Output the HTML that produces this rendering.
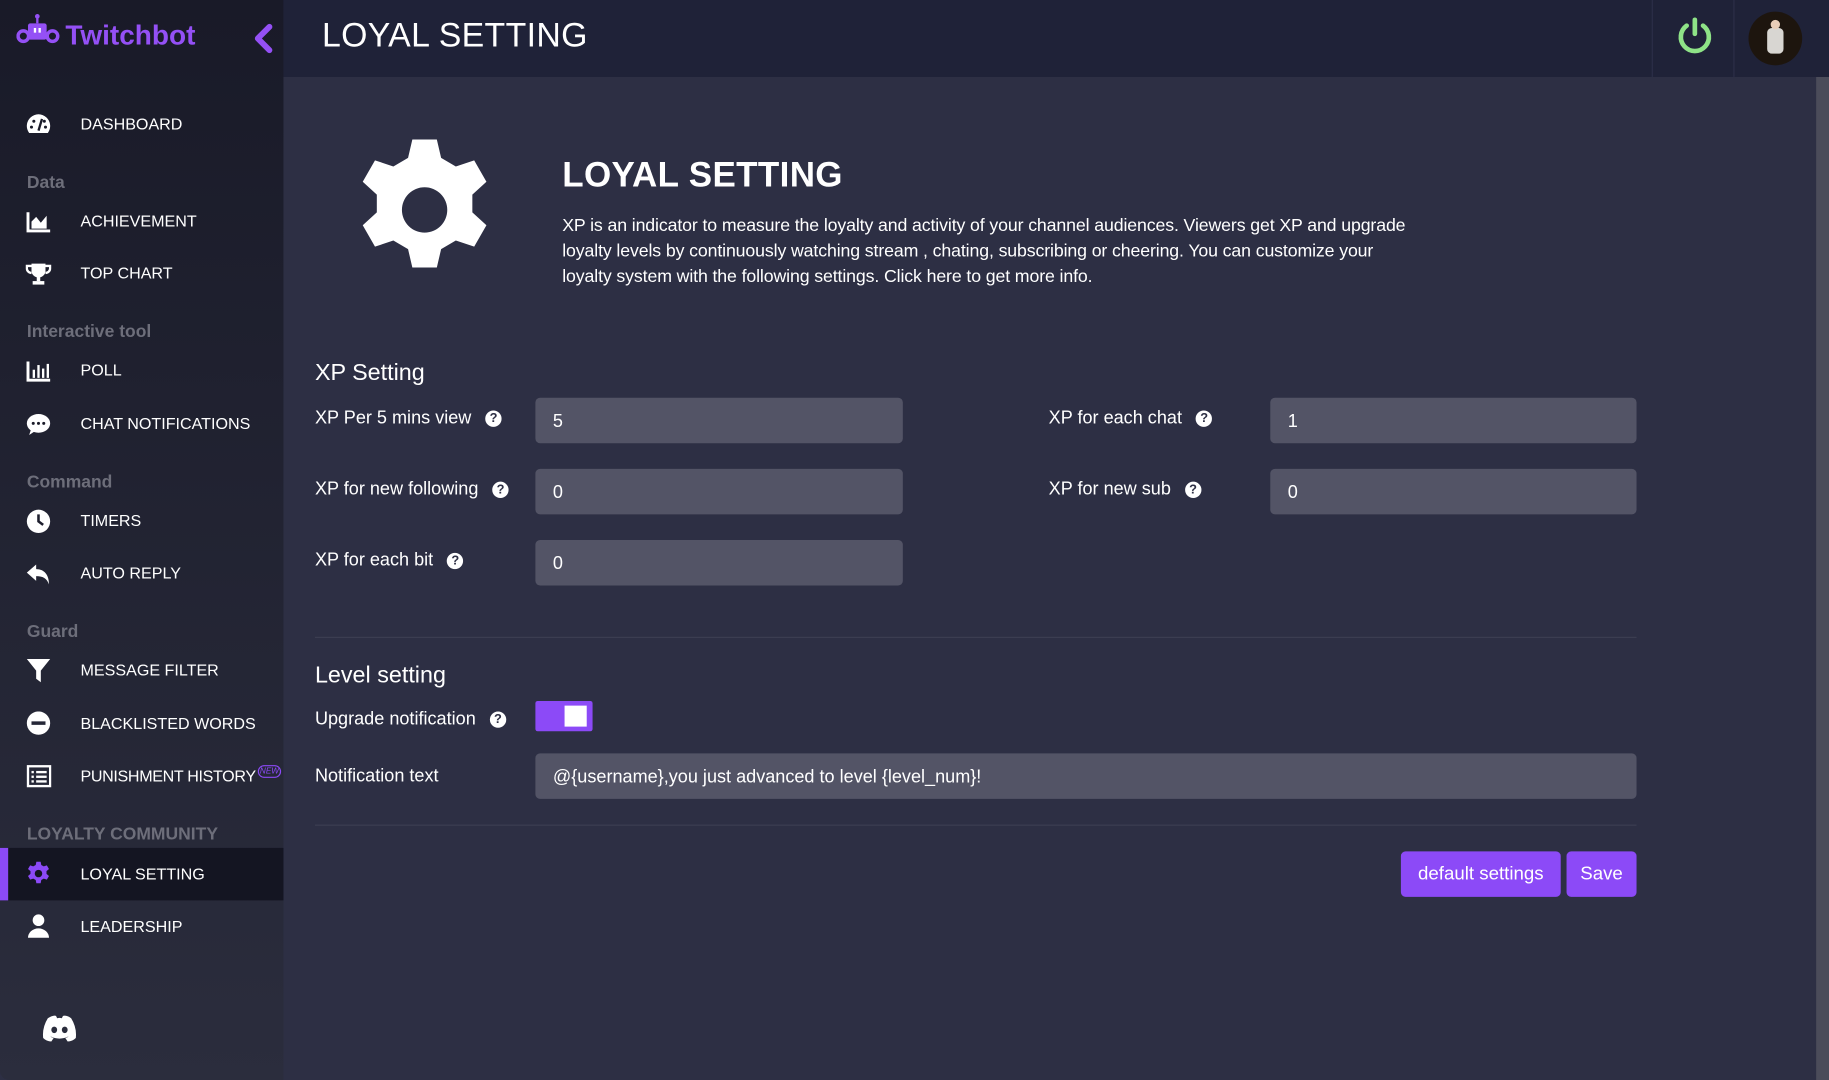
<!DOCTYPE html>
<html><head><meta charset="utf-8"><style>
*{box-sizing:border-box;margin:0;padding:0}
html,body{width:1829px;height:1080px;overflow:hidden;background:#2d2f44}
#w{position:absolute;left:0;top:0;width:1568px;height:926px;transform:scale(1.16645,1.16631);transform-origin:0 0;font-family:"Liberation Sans",sans-serif;color:#fff}
.a{position:absolute}
#side{left:0;top:0;width:243px;height:926px;background:linear-gradient(#191a28,#2b2d3d);border-bottom-left-radius:8px}
#hdr{left:243px;top:0;width:1325px;height:66px;background:#1f2238}
.it{position:absolute;left:69px;font-size:13.8px;line-height:16px}
.ic{position:absolute;left:22px;width:22px;height:22px}
.gr{position:absolute;left:23px;font-size:15px;font-weight:bold;color:#6d6e7a}
.lab{position:absolute;font-size:15.5px}
.inp{position:absolute;background:#535466;border-radius:4px;height:39px;font-size:15.5px;padding:12px 0 0 15px}
.q{display:inline-block;width:14px;height:14px;border-radius:50%;background:#fff;color:#2d2f44;font-size:11px;font-weight:bold;text-align:center;line-height:14px;vertical-align:1px;margin-left:12px}
.btn{position:absolute;background:#8c4af7;border-radius:4px;height:39px;font-size:16px;text-align:center;line-height:39px}
</style></head><body><div id="w">
<div class="a" id="side"></div>
<div class="a" id="hdr"></div>
<div class="a" style="left:1557px;top:66px;width:11px;height:860px;background:#4b4c5a"></div>
<div class="a" style="left:1416px;top:0;width:1px;height:66px;background:#2c2f48"></div>
<div class="a" style="left:1486px;top:0;width:1px;height:66px;background:#2c2f48"></div>
<svg class="a" style="left:14px;top:12px" width="40" height="30" viewBox="0 0 40 30"><rect x="10" y="8" width="16" height="14" rx="2" fill="#9450f5"/><rect x="17" y="2" width="2" height="6" fill="#9450f5"/><circle cx="18" cy="2" r="2" fill="#9450f5"/><rect x="15" y="12" width="2" height="4" fill="#fff"/><rect x="19" y="12" width="2" height="4" fill="#fff"/><circle cx="6" cy="19" r="4.5" fill="none" stroke="#9450f5" stroke-width="3"/><circle cx="31" cy="19" r="4.5" fill="none" stroke="#9450f5" stroke-width="3"/></svg>
<div class="a" style="left:56px;top:17px;font-size:24px;font-weight:bold;color:#9450f5">Twitchbot</div>
<svg class="a" style="left:216px;top:20px" width="20" height="26" viewBox="0 0 20 26"><path d="M15 3 L5 13 L15 23" stroke="#9450f5" stroke-width="5" fill="none" stroke-linecap="round" stroke-linejoin="round"/></svg>
<div class="a" style="left:276px;top:15px;font-size:29px;color:#fff;letter-spacing:0.3px">LOYAL SETTING</div>
<svg class="a" style="left:1436px;top:14px" width="34" height="34" viewBox="0 0 34 34"><path d="M10 8 A12 12 0 1 0 24 8" fill="none" stroke="#8ee387" stroke-width="4" stroke-linecap="round"/><line x1="17" y1="3" x2="17" y2="15" stroke="#8ee387" stroke-width="4" stroke-linecap="round"/></svg>
<div class="a" style="left:1499px;top:10px;width:46px;height:46px;border-radius:50%;background:#1d150e;overflow:hidden"><div class="a" style="left:16px;top:14px;width:14px;height:22px;background:#d8d6d2;border-radius:4px"></div><div class="a" style="left:19px;top:7px;width:8px;height:8px;border-radius:50%;background:#e8cdb8"></div></div>
<svg class="ic" style="top:96px" viewBox="0 0 22 22"><path d="M3 18 A10 10 0 1 1 19 18 Z" fill="#fff"/><circle cx="5" cy="13" r="1.3" fill="#191a28"/><circle cx="7" cy="8" r="1.3" fill="#191a28"/><circle cx="16" cy="8" r="1.3" fill="#191a28"/><circle cx="17" cy="13" r="1.3" fill="#191a28"/><path d="M11 16 L14 6" stroke="#191a28" stroke-width="2"/></svg>
<div class="it" style="top:99px">DASHBOARD</div>
<div class="gr" style="top:148px">Data</div>
<svg class="ic" style="top:179px" viewBox="0 0 22 22"><path d="M2 3 V19 H21" stroke="#fff" stroke-width="2.5" fill="none"/><path d="M5 17 L5 11 L9 7 L13 12 L18 6 L18 17 Z" fill="#fff"/></svg>
<div class="it" style="top:182px">ACHIEVEMENT</div>
<svg class="ic" style="top:224px" viewBox="0 0 22 22"><path d="M5 2 H17 V8 A6 6 0 0 1 5 8 Z" fill="#fff"/><path d="M5 4 H1 V6 A4 4 0 0 0 5 10 M17 4 H21 V6 A4 4 0 0 1 17 10" stroke="#fff" stroke-width="2" fill="none"/><rect x="9.5" y="13" width="3" height="4" fill="#fff"/><rect x="6" y="17" width="10" height="3" fill="#fff"/></svg>
<div class="it" style="top:227px">TOP CHART</div>
<div class="gr" style="top:276px">Interactive tool</div>
<svg class="ic" style="top:307px" viewBox="0 0 22 22"><path d="M2 3 V19 H21" stroke="#fff" stroke-width="2.5" fill="none"/><rect x="6" y="10" width="2" height="7" fill="#fff"/><rect x="10" y="6" width="2" height="11" fill="#fff"/><rect x="14" y="9" width="2" height="8" fill="#fff"/><rect x="18" y="5" width="2" height="12" fill="#fff"/></svg>
<div class="it" style="top:310px">POLL</div>
<svg class="ic" style="top:353px" viewBox="0 0 22 22"><ellipse cx="11" cy="10" rx="10" ry="8" fill="#fff"/><path d="M3 20 L5 14 L9 16 Z" fill="#fff"/><circle cx="6.5" cy="10" r="1.3" fill="#191a28"/><circle cx="11" cy="10" r="1.3" fill="#191a28"/><circle cx="15.5" cy="10" r="1.3" fill="#191a28"/></svg>
<div class="it" style="top:356px">CHAT NOTIFICATIONS</div>
<div class="gr" style="top:405px">Command</div>
<svg class="ic" style="top:436px" viewBox="0 0 22 22"><circle cx="11" cy="11" r="10" fill="#fff"/><path d="M11 5 V11 L15 14" stroke="#1e1f2e" stroke-width="2.2" fill="none"/></svg>
<div class="it" style="top:439px">TIMERS</div>
<svg class="ic" style="top:481px" viewBox="0 0 22 22"><path d="M9 3 L1 10 L9 17 V13 C15 13 18 15 20 20 C20 12 16 7 9 7 Z" fill="#fff"/></svg>
<div class="it" style="top:484px">AUTO REPLY</div>
<div class="gr" style="top:533px">Guard</div>
<svg class="ic" style="top:564px" viewBox="0 0 22 22"><path d="M1 1 H21 L13 11 V21 L9 18 V11 Z" fill="#fff"/></svg>
<div class="it" style="top:567px">MESSAGE FILTER</div>
<svg class="ic" style="top:610px" viewBox="0 0 22 22"><circle cx="11" cy="10" r="10" fill="#fff"/><rect x="5" y="8.5" width="12" height="3" fill="#252737"/></svg>
<div class="it" style="top:613px">BLACKLISTED WORDS</div>
<svg class="ic" style="top:655px" viewBox="0 0 22 22"><rect x="2" y="2" width="19" height="17" fill="none" stroke="#fff" stroke-width="2"/><rect x="5" y="6" width="2" height="2" fill="#fff"/><rect x="9" y="6" width="9" height="2" fill="#fff"/><rect x="5" y="10" width="2" height="2" fill="#fff"/><rect x="9" y="10" width="9" height="2" fill="#fff"/><rect x="5" y="14" width="2" height="2" fill="#fff"/><rect x="9" y="14" width="9" height="2" fill="#fff"/></svg>
<div class="it" style="top:658px;letter-spacing:-0.3px">PUNISHMENT HISTORY</div>
<div class="a" style="left:221px;top:656px;width:20px;height:11px;border:1px solid #8c4af7;border-radius:6px;font-size:7px;font-style:italic;color:#8c4af7;text-align:center;line-height:9px">NEW</div>
<div class="gr" style="top:707px">LOYALTY COMMUNITY</div>
<div class="a" style="left:0;top:727px;width:243px;height:45px;background:#141522"></div>
<div class="a" style="left:0;top:727px;width:7px;height:45px;background:#8c4af7"></div>
<svg class="ic" style="top:738px" viewBox="0 0 24 24"><path fill="#8c4af7" fill-rule="evenodd" d="M10 1h4l.6 3 2.3 1.3 2.9-1 2 3.4-2.3 2 v2.6l2.3 2-2 3.4-2.9-1-2.3 1.3-.6 3h-4l-.6-3-2.3-1.3-2.9 1-2-3.4 2.3-2v-2.6l-2.3-2 2-3.4 2.9 1L9.4 4z M12 8.5a3.5 3.5 0 1 0 0 7 3.5 3.5 0 1 0 0-7z"/></svg>
<div class="it" style="top:742px">LOYAL SETTING</div>
<svg class="ic" style="top:783px" viewBox="0 0 22 22"><circle cx="11" cy="6" r="5" fill="#fff"/><path d="M2 21 A9 8 0 0 1 20 21 Z" fill="#fff"/></svg>
<div class="it" style="top:787px">LEADERSHIP</div>
<svg class="a" style="left:35px;top:870px" width="32" height="24" viewBox="0 0 32 24"><path fill="#fff" d="M6 3 Q11 0 13 1 L14 3 Q16 2.5 18 3 L19 1 Q22 0 26 3 Q31 11 30 20 Q27 23 23 23 L21 20 Q23 19.5 24 18.5 Q16 22.5 8 18.5 Q9 19.5 11 20 L9 23 Q5 23 2 20 Q1 11 6 3 Z"/><ellipse cx="11.5" cy="13" rx="2.5" ry="2.8" fill="#2a2c3c"/><ellipse cx="20.5" cy="13" rx="2.5" ry="2.8" fill="#2a2c3c"/></svg>
<svg class="a" style="left:301px;top:116px" width="126" height="128" viewBox="0 0 24 24"><path fill="#fff" fill-rule="evenodd" d="M10 0.5h4l.7 3 2.4 1.4 3-1 2 3.5-2.3 2.1v2.9l2.3 2.1-2 3.5-3-1-2.4 1.4-.7 3h-4l-.7-3-2.4-1.4-3 1-2-3.5 2.3-2.1V9.5L1.9 7.4l2-3.5 3 1L9.3 3.5z M12 8.3a3.7 3.7 0 1 0 0 7.4 3.7 3.7 0 1 0 0-7.4z"/></svg>
<div class="a" style="left:482px;top:134px;font-size:30px;font-weight:bold;letter-spacing:0.3px">LOYAL SETTING</div>
<div class="a" style="left:482px;top:183px;width:900px;white-space:nowrap;font-size:15.2px;line-height:22px;letter-spacing:-0.1px">XP is an indicator to measure the loyalty and activity of your channel audiences. Viewers get XP and upgrade<br>loyalty levels by continuously watching stream , chating, subscribing or cheering. You can customize your<br>loyalty system with the following settings. Click here to get more info.</div>
<div class="a" style="left:270px;top:309px;font-size:20px">XP Setting</div>
<div class="lab" style="left:270px;top:350px">XP Per 5 mins view<span class="q">?</span></div>
<div class="inp" style="left:459px;top:341px;width:315px">5</div>
<div class="lab" style="left:270px;top:411px">XP for new following<span class="q">?</span></div>
<div class="inp" style="left:459px;top:402px;width:315px">0</div>
<div class="lab" style="left:270px;top:472px">XP for each bit<span class="q">?</span></div>
<div class="inp" style="left:459px;top:463px;width:315px">0</div>
<div class="lab" style="left:899px;top:350px">XP for each chat<span class="q">?</span></div>
<div class="inp" style="left:1089px;top:341px;width:314px">1</div>
<div class="lab" style="left:899px;top:411px">XP for new sub<span class="q">?</span></div>
<div class="inp" style="left:1089px;top:402px;width:314px">0</div>
<div class="a" style="left:270px;top:546px;width:1133px;height:1px;background:#3c3e52"></div>
<div class="a" style="left:270px;top:568px;font-size:20px">Level setting</div>
<div class="lab" style="left:270px;top:608px">Upgrade notification<span class="q">?</span></div>
<div class="a" style="left:459px;top:601px;width:49px;height:26px;background:#8c4af7;border-radius:2px"></div>
<div class="a" style="left:484px;top:605px;width:19px;height:18px;background:#fff"></div>
<div class="lab" style="left:270px;top:657px">Notification text</div>
<div class="inp" style="left:459px;top:646px;width:944px">@{username},you just advanced to level {level_num}!</div>
<div class="a" style="left:270px;top:707px;width:1133px;height:1px;background:#3c3e52"></div>
<div class="btn" style="left:1201px;top:730px;width:137px">default settings</div>
<div class="btn" style="left:1343px;top:730px;width:60px">Save</div>
</div></body></html>
